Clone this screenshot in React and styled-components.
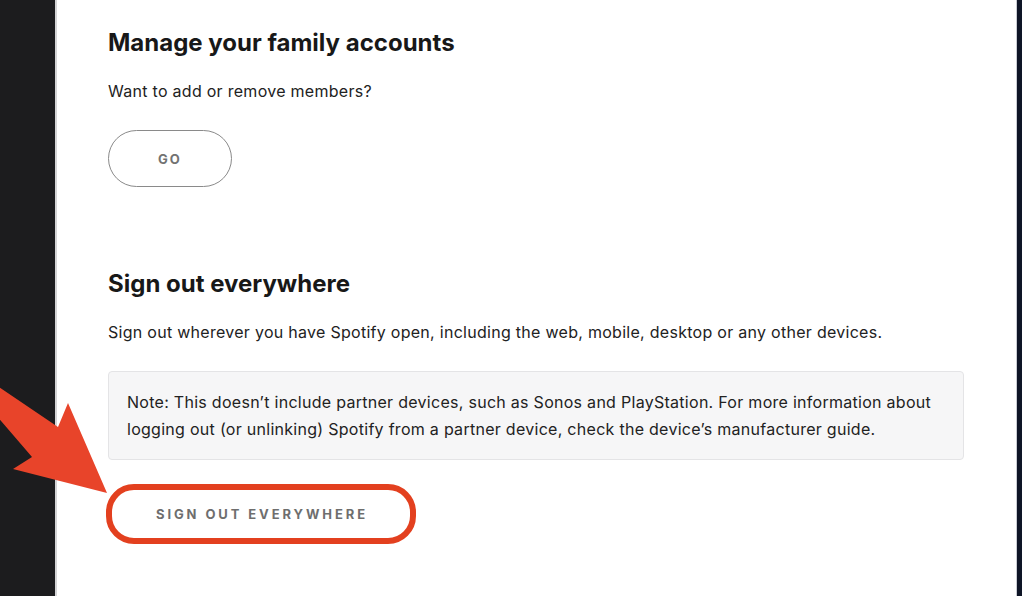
import React from "react";
import styled, { createGlobalStyle } from "styled-components";

const Global = createGlobalStyle`
  html, body { margin: 0; padding: 0; height: 100%; overflow: hidden; }
  body { font-family: "Inter", "Liberation Sans", sans-serif; background: #fff; }
  #root { height: 100%; }
`;

const Frame = styled.div`
  position: relative;
  display: flex;
  width: 1022px;
  height: 596px;
  overflow: hidden;
`;

const LeftRail = styled.div`
  width: 55px;
  flex: none;
  background: #1c1c1e;
  border-right: 2px solid #d4d4d6;
`;

const RightRail = styled.div`
  width: 5px;
  flex: none;
  background: #0e1526;
  border-left: 1px solid #c9ccd3;
`;

const Panel = styled.main`
  flex: 1;
  background: #fff;
  padding: 27px 0 0 51px;
  display: flex;
  flex-direction: column;
  align-items: flex-start;
`;

const Title = styled.h2`
  margin: ${(p) => p.$top || 0}px 0 0;
  font-size: 24px;
  line-height: 32px;
  font-weight: 700;
  color: #181818;
  letter-spacing: 0;
`;

const Text = styled.p`
  margin: 20px 0 0;
  font-size: 16px;
  line-height: 24px;
  letter-spacing: 0.28px;
  color: #222;
`;

const PillButton = styled.button`
  margin-top: 27px;
  width: 124px;
  height: 57px;
  border-radius: 29px;
  border: 1.5px solid #8a8a8a;
  background: #fff;
  font-family: inherit;
  font-size: 13px;
  font-weight: 700;
  letter-spacing: 2.2px;
  color: #727272;
`;

const Note = styled.div`
  margin-top: 27px;
  width: 818px;
  padding: 17px 18px 16px;
  background: #f6f6f7;
  border: 1px solid #e4e4e6;
  border-radius: 4px;
  font-size: 16px;
  line-height: 27px;
  letter-spacing: 0.28px;
  color: #222;
`;

const Highlight = styled.div`
  margin-top: 24px;
  margin-left: -2px;
  width: 298px;
  height: 48px;
  border: 6px solid #e3401f;
  border-radius: 28px;
  display: flex;
  align-items: center;
  justify-content: center;
`;

const GhostButton = styled.button`
  border: none;
  background: transparent;
  font-family: inherit;
  font-size: 13px;
  font-weight: 700;
  letter-spacing: 2.9px;
  color: #6e6e6e;
  padding: 0;
  margin-left: 2px;
`;

const Arrow = styled.svg`
  position: absolute;
  left: 0;
  top: 0;
  pointer-events: none;
`;

export default function App() {
  return (
    <>
      <Global />
      <Frame>
        <LeftRail />
        <Panel>
          <Title>Manage your family accounts</Title>
          <Text>Want to add or remove members?</Text>
          <PillButton>GO</PillButton>
          <Title $top={81}>Sign out everywhere</Title>
          <Text>
            Sign out wherever you have Spotify open, including the web, mobile,
            desktop or any other devices.
          </Text>
          <Note>
            Note: This doesn’t include partner devices, such as Sonos and
            PlayStation. For more information about logging out (or unlinking)
            Spotify from a partner device, check the device’s manufacturer guide.
          </Note>
          <Highlight>
            <GhostButton>SIGN OUT EVERYWHERE</GhostButton>
          </Highlight>
        </Panel>
        <RightRail />
        <Arrow width="1022" height="596" viewBox="0 0 1022 596">
          <polygon
            points="-10,381 58,427 68,403 107,493 13,469 32,457 -10,408"
            fill="#e8442a"
          />
        </Arrow>
      </Frame>
    </>
  );
}
